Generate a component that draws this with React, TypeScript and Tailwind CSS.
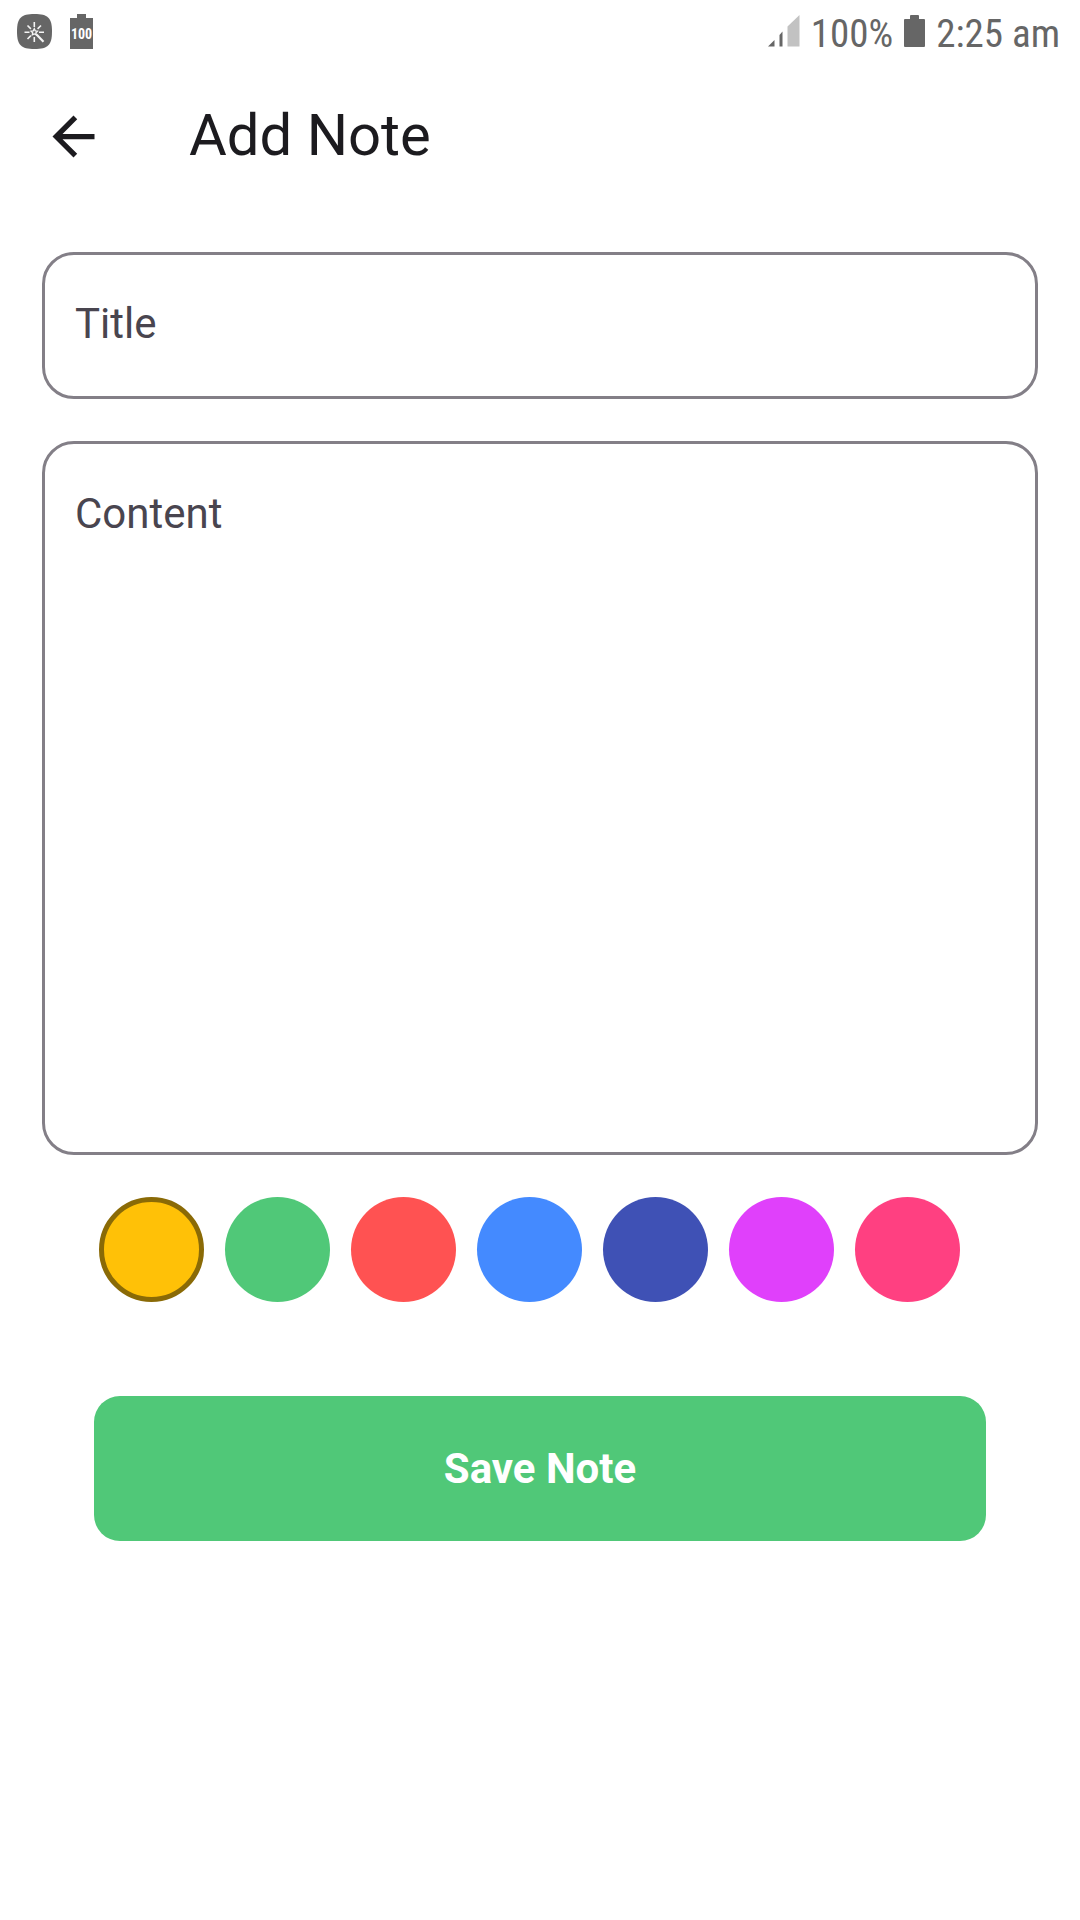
import { useState } from "react";

const NOTE_COLORS = [
  { name: "Amber", fill: "bg-[#ffc107]", ring: "checked:border-[#8a6a06]" },
  { name: "Green", fill: "bg-[#50c878]", ring: "checked:border-[#2b6c41]" },
  { name: "Red", fill: "bg-[#ff5252]", ring: "checked:border-[#8a2c2c]" },
  { name: "Blue", fill: "bg-[#448aff]", ring: "checked:border-[#254b8a]" },
  { name: "Indigo", fill: "bg-[#3f51b5]", ring: "checked:border-[#222c62]" },
  { name: "Purple", fill: "bg-[#e040fb]", ring: "checked:border-[#792388]" },
  { name: "Pink", fill: "bg-[#ff4081]", ring: "checked:border-[#8a2346]" },
];

function CleanerIcon() {
  return (
    <svg width="35" height="35" viewBox="0 0 35 35" aria-hidden="true">
      <path
        d="M17.5 0C31 0 35 4 35 17.5S31 35 17.5 35 0 31 0 17.5 4 0 17.5 0Z"
        fill="#666"
      />
      <g stroke="#f4f4f4" strokeWidth="1.6" fill="none">
        <path d="M17.3 8v5M17.3 23v5M7.5 18.3h5M22 18.3h5M10.5 11.5l3.4 3.4M24 11.5l-3.4 3.4M10.5 25l3.4-3.4" />
        <path d="M19.5 20.5l7 7.2" strokeWidth="2.2" />
        <path d="M17.3 14.8l1 2 2.2.3-1.6 1.6.4 2.2-2-1-2 1 .4-2.2-1.6-1.6 2.2-.3Z" strokeWidth="1.3" />
      </g>
    </svg>
  );
}

function BatteryFullBadge() {
  return (
    <svg width="23" height="35" viewBox="0 0 23 35" role="img" aria-label="Battery 100">
      <path d="M7 0h9v4h7v31H0V4h7Z" fill="#666" />
      <text
        x="11.5"
        y="25"
        textAnchor="middle"
        fill="#fff"
        className="font-['Roboto_Condensed',Roboto,sans-serif] text-[14px] font-bold"
      >
        100
      </text>
    </svg>
  );
}

function SignalIcon() {
  return (
    <svg width="32" height="32" viewBox="0 0 32 32" aria-hidden="true">
      <path d="M0 31.5 6.500 25v6.500Z" fill="#666" />
      <path d="M11.500 20 14.500 16.500v15h-3Z" fill="#666" />
      <path d="M19.500 11.500 31.500 0v31.500h-12Z" fill="#c2c2c2" />
    </svg>
  );
}

function BatteryIcon() {
  return (
    <svg width="21" height="32" viewBox="0 0 21 32" aria-hidden="true">
      <path d="M6 1q0-1 1-1h7q1 0 1 1v3h5q1 0 1 1v26q0 1-1 1H1q-1 0-1-1V5q0-1 1-1h5Z" fill="#666" />
    </svg>
  );
}

function StatusBar() {
  return (
    <div className="flex h-[63px] items-center justify-between pl-[17px] pr-5 text-[#666]">
      <div className="flex items-center gap-[18px]">
        <CleanerIcon />
        <BatteryFullBadge />
      </div>
      <div className="flex items-baseline gap-[11px] pt-1 font-['Roboto_Condensed',Roboto,sans-serif] text-[39px] leading-[42px]">
        <SignalIcon />
        <span>100%</span>
        <BatteryIcon />
        <span>2:25 am</span>
      </div>
    </div>
  );
}

export default function App() {
  const [selected, setSelected] = useState("Amber");

  return (
    <div className="min-h-screen bg-white font-[Roboto,sans-serif]">
      <StatusBar />
      <header className="flex h-[147px] items-center gap-[84px] pl-[42px] text-[#1c1b1f]">
        <button type="button" aria-label="Back">
          <svg width="63" height="63" viewBox="0 0 24 24" fill="currentColor" aria-hidden="true">
            <path d="M20 11H7.830l5.590-5.590L12 4l-8 8 8 8 1.410-1.410L7.830 13H20v-2z" />
          </svg>
        </button>
        <h1 className="pb-1 text-[58px] leading-[68px]">Add Note</h1>
      </header>

      <form
        className="flex flex-col px-[42px] pt-[42px]"
        onSubmit={(event) => event.preventDefault()}
      >
        <input
          type="text"
          aria-label="Title"
          placeholder="Title"
          className="h-[147px] w-full rounded-[32px] border-[3px] border-[#837f87] px-[30px] pb-1 text-[42px] text-[#1c1b1f] outline-none placeholder:text-[#49454f]"
        />
        <textarea
          aria-label="Content"
          placeholder="Content"
          className="mt-[42px] h-[714px] w-full resize-none rounded-[32px] border-[3px] border-[#837f87] px-[30px] py-[38px] text-[42px] leading-[63px] text-[#1c1b1f] outline-none placeholder:text-[#49454f]"
        />

        <div role="radiogroup" aria-label="Note color" className="mt-[42px] flex justify-center">
          {NOTE_COLORS.map((color) => (
            <input
              key={color.name}
              type="radio"
              name="note-color"
              aria-label={color.name}
              checked={selected === color.name}
              onChange={() => setSelected(color.name)}
              className={`mr-[21px] size-[105px] shrink-0 cursor-pointer appearance-none rounded-full checked:border-[5px] ${color.fill} ${color.ring}`}
            />
          ))}
        </div>

        <button
          type="submit"
          className="mx-[52px] mt-[94px] h-[145px] rounded-[26px] bg-[#50c878] text-[42px] font-bold text-white"
        >
          Save Note
        </button>
      </form>
    </div>
  );
}
